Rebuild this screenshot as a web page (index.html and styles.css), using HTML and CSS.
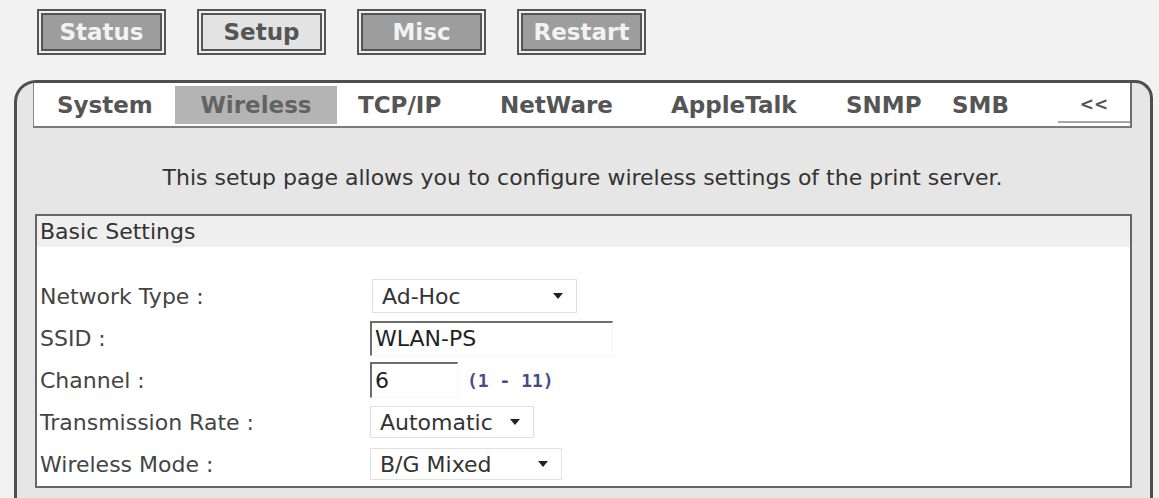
FILE: index.html
```html
<!DOCTYPE html>
<html lang="en">
<head>
  <meta charset="UTF-8" />
  <title>Print Server - Wireless Setup</title>
  <link rel="stylesheet" href="styles.css">
</head>
<body>

  <div class="topnav">
    <a class="navbtn navbtn-dark">Status</a>
    <a class="navbtn navbtn-light">Setup</a>
    <a class="navbtn navbtn-dark">Misc</a>
    <a class="navbtn navbtn-dark">Restart</a>
  </div>

  <div class="frame">
    <div class="tabbar">
      <a class="tab">System</a>
      <a class="tab tab-active">Wireless</a>
      <a class="tab">TCP/IP</a>
      <a class="tab">NetWare</a>
      <a class="tab">AppleTalk</a>
      <a class="tab">SNMP</a>
      <a class="tab">SMB</a>
      <div class="tab tab-more"><span>&lt;&lt;</span></div>
    </div>

    <p class="intro">This setup page allows you to configure wireless settings of the print server.</p>

    <div class="panel">
      <div class="panel-head">Basic Settings</div>
      <div class="panel-body">
        <div class="row">
          <label>Network Type :</label>
          <div class="select select-type"><span>Ad-Hoc</span><i class="arrow"></i></div>
        </div>
        <div class="row">
          <label>SSID :</label>
          <div><input class="field field-ssid" type="text" value="WLAN-PS"></div>
        </div>
        <div class="row">
          <label>Channel :</label>
          <div class="inline">
            <input class="field field-channel" type="text" value="6">
            <span class="range">(1 - 11)</span>
          </div>
        </div>
        <div class="row">
          <label>Transmission Rate :</label>
          <div class="select select-rate"><span>Automatic</span><i class="arrow"></i></div>
        </div>
        <div class="row">
          <label>Wireless Mode :</label>
          <div class="select select-mode"><span>B/G Mixed</span><i class="arrow"></i></div>
        </div>
      </div>
    </div>
  </div>

</body>
</html>
```

FILE: styles.css
```css
* {
  margin: 0;
  padding: 0;
  box-sizing: border-box;
  font-family: 'DejaVu Sans', Verdana, sans-serif;
}

body {
  background: #f2f2f2;
  color: #333;
}

/* top buttons */
.topnav {
  display: flex;
  gap: 31px;
  padding: 9px 0 0 37px;
}

.navbtn {
  display: flex;
  align-items: center;
  justify-content: center;
  width: 129px;
  height: 46px;
  border: 6px double #555;
  background-clip: padding-box;
  font-size: 23px;
  font-weight: bold;
  cursor: pointer;
}

.navbtn-dark {
  background-color: #9d9d9d;
  color: #f2f2f2;
}

.navbtn-light {
  background-color: #e3e3e3;
  color: #555;
}

/* main frame */
.frame {
  margin: 25px 6px 0 14px;
  border: 3px solid #4f4f4f;
  border-bottom: none;
  border-radius: 22px 18px 0 0;
  background: #e6e6e6;
  padding: 0 18px 10px 16px;
}

.tabbar {
  display: grid;
  grid-template-columns: 141px 162px 142px 171px 175px 106px 106px 1fr;
  height: 45px;
  background: #fff;
  border-left: 1px solid #888;
  border-right: 2px solid #6f6f6f;
  border-bottom: 2px solid #7a7a7a;
}

.tab {
  display: flex;
  align-items: center;
  height: 38px;
  margin-top: 3px;
  padding-left: 21px;
  font-size: 23px;
  font-weight: bold;
  color: #555;
  cursor: pointer;
}

.tab:first-child {
  padding-left: 23px;
}

.tab-active {
  justify-content: center;
  padding-left: 0;
  background: #b4b4b4;
  color: #636363;
}

.tab-more span {
  display: flex;
  align-items: center;
  justify-content: center;
  width: 100%;
  height: 36px;
  border-bottom: 2px solid #a5a5a5;
  font-size: 17px;
  color: #555;
}

.intro {
  margin: 37px 0 23px;
  font-size: 22px;
  line-height: 26px;
  text-align: center;
  color: #333;
}

/* settings panel */
.panel {
  margin-left: 2px;
  border: 2px solid #666;
  background: #fff;
}

.panel-head {
  height: 31px;
  line-height: 31px;
  padding-left: 3px;
  background: #efefef;
  font-size: 22px;
  color: #333;
}

.panel-body {
  padding: 28px 0 1px;
}

.row {
  display: grid;
  grid-template-columns: 333px 1fr;
  align-items: center;
  height: 42px;
}

.row label {
  padding-left: 3px;
  font-size: 22px;
  color: #444;
}

.select {
  display: flex;
  align-items: center;
  justify-content: space-between;
  height: 34px;
  padding: 0 13px 0 9px;
  border: 1px solid #e0e0e0;
  background: #fff;
  font-size: 22px;
  color: #333;
}

.select-type {
  width: 205px;
  margin-left: 2px;
}

.select-rate {
  width: 164px;
  height: 32px;
}

.select-mode {
  width: 192px;
  height: 32px;
}

.arrow {
  width: 0;
  height: 0;
  border-left: 5px solid transparent;
  border-right: 5px solid transparent;
  border-top: 6px solid #222;
}

.field {
  display: block;
  height: 35px;
  padding-left: 3px;
  border-top: 2px solid #6d6d6d;
  border-left: 2px solid #6d6d6d;
  border-right: 1px solid #f6f6f6;
  border-bottom: 1px solid #f6f6f6;
  background: #fff;
  font-size: 22px;
  color: #222;
  outline: none;
}

.field-ssid {
  width: 243px;
}

.field-channel {
  width: 88px;
  height: 36px;
}

.inline {
  display: flex;
  align-items: center;
}

.range {
  margin-left: 9px;
  font-family: 'DejaVu Sans Mono', monospace;
  font-size: 18px;
  font-weight: bold;
  color: #4a4a88;
}
```
